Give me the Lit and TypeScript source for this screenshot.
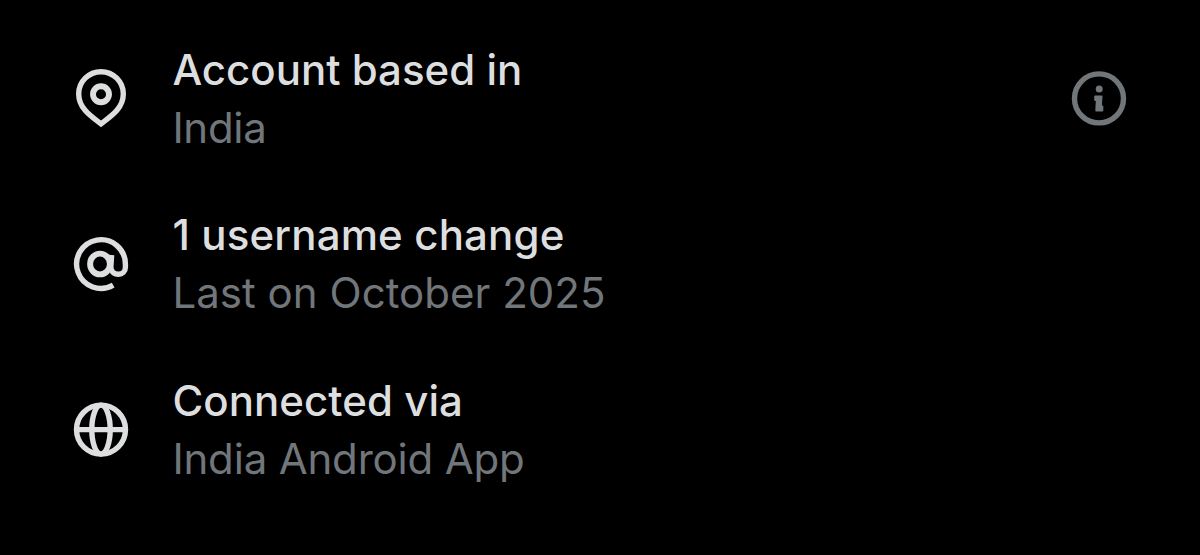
import { css, html, LitElement, svg } from "lit";
import { customElement, property } from "lit/decorators.js";

const icons = {
  pin: svg`
    <path d="M30 54.8C21.5 48.2 7.7 40 7.7 24.9A22.3 22.2 0 0 1 52.3 24.9C52.3 40 38.5 48.2 30 54.8Z" />
    <circle class="bold" cx="30" cy="25.3" r="8" />
  `,
  at: svg`
    <path d="M42.2 51.2A24.4 24.4 0 1 1 54.4 30V33.2C54.4 37.7 51.4 40.2 47.4 40.2C42.6 40.2 39.6 37.2 39.9 32.4L40.6 21" />
    <ellipse class="bold" cx="29" cy="30" rx="9.9" ry="10.4" />
  `,
  globe: svg`
    <circle cx="30" cy="29.6" r="24.5" />
    <ellipse cx="30" cy="29.6" rx="9.2" ry="24.5" />
    <path d="M6 29.6H54" />
  `,
  info: svg`
    <circle cx="30" cy="29.4" r="24.5" />
    <circle class="fill" cx="30.2" cy="19.9" r="3.5" />
    <path class="fill" d="M26.2 26.6H32.6Q33.6 26.6 33.5 27.8L32.9 36.6H33.4Q34.3 36.6 34.3 37.4V41.4Q34.3 42.4 33.2 42.4H27.4Q26.2 42.4 26.3 41.2L26.8 32H26.2Q25.2 32 25.2 31V27.6Q25.2 26.6 26.2 26.6Z" />
  `,
};

type IconName = keyof typeof icons;

@customElement("account-icon")
export class AccountIcon extends LitElement {
  @property() name: IconName = "pin";

  static override styles = css`
    :host {
      display: block;
      width: 60px;
      height: 60px;
    }
    svg {
      display: block;
      fill: none;
      stroke: currentColor;
      stroke-width: 5.4;
    }
    .bold {
      stroke-width: 5.9;
    }
    .fill {
      fill: currentColor;
      stroke: none;
    }
  `;

  override render() {
    return html`
      <svg width="60" height="60" viewBox="0 0 60 60" aria-hidden="true">
        ${icons[this.name]}
      </svg>
    `;
  }
}

@customElement("account-row")
export class AccountRow extends LitElement {
  @property() icon: IconName = "pin";
  @property() heading = "";
  @property() detail = "";
  @property({ type: Boolean }) info = false;

  static override styles = css`
    :host {
      display: flex;
      align-items: center;
      color: #dddedf;
    }
    .text {
      flex: 1;
      margin-left: 41.4px;
      font-size: 42px;
      line-height: 58.4px;
      white-space: nowrap;
    }
    .heading {
      font-weight: 500;
      letter-spacing: var(--heading-tracking, 0);
    }
    .detail {
      color: #71767b;
      letter-spacing: var(--detail-tracking, 0);
    }
    .info {
      color: #71767b;
    }
  `;

  override render() {
    return html`
      <account-icon name=${this.icon}></account-icon>
      <div class="text">
        <div class="heading">${this.heading}</div>
        <div class="detail">${this.detail}</div>
      </div>
      ${this.info
        ? html`<account-icon class="info" name="info"></account-icon>`
        : null}
    `;
  }
}

@customElement("app-root")
export class AppRoot extends LitElement {
  static override styles = css`
    :host {
      display: flex;
      flex-direction: column;
      gap: 48.5px;
      box-sizing: border-box;
      height: 555px;
      padding: 40.6px 71px 0;
      overflow: hidden;
      background: #000;
      font-family: Inter, "Liberation Sans", sans-serif;
    }
    .location {
      --detail-tracking: -0.3px;
    }
    .username {
      --heading-tracking: 0.15px;
      --detail-tracking: 0.03px;
    }
    .source {
      margin-top: 0.6px;
      --heading-tracking: 0.05px;
      --detail-tracking: -0.18px;
    }
  `;

  override render() {
    return html`
      <account-row
        class="location"
        icon="pin"
        heading="Account based in"
        detail="India"
        info
      ></account-row>
      <account-row
        class="username"
        icon="at"
        heading="1 username change"
        detail="Last on October 2025"
      ></account-row>
      <account-row
        class="source"
        icon="globe"
        heading="Connected via"
        detail="India Android App"
      ></account-row>
    `;
  }
}
